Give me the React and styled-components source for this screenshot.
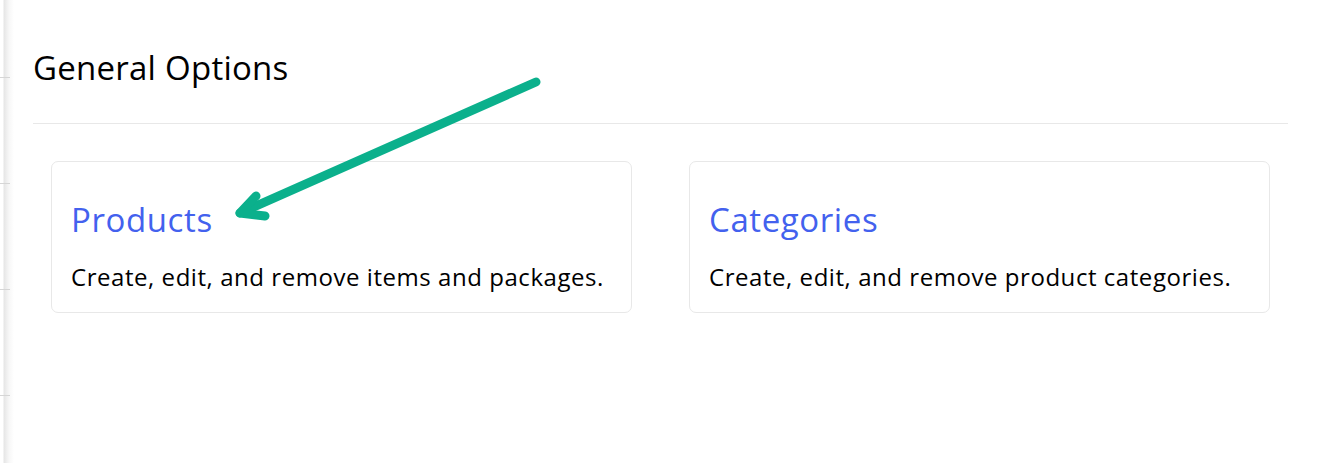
import React from "react";
import styled, { createGlobalStyle } from "styled-components";

const Global = createGlobalStyle`
  html, body { margin: 0; padding: 0; background: #fff; }
  body { font-family: "Open Sans", "Noto Sans", sans-serif; color: #000; }
`;

const Page = styled.div`
  position: relative;
  display: flex;
  width: 1322px;
  height: 463px;
  overflow: hidden;
  background: #fff;
`;

const Sidebar = styled.aside`
  width: 14px;
  flex: none;
  display: flex;
  flex-direction: column;
  background: linear-gradient(to right, #fff 0, #fff 3px, #e6e6e6 4px, #f7f7f7 9px, #fff 14px);
`;

const SideRow = styled.div`
  height: ${(p) => p.$h}px;
  flex: none;
  border-bottom: 1px solid #d6d6d6;
  width: 10px;
`;

const Main = styled.main`
  flex: 1;
  padding: 48px 34px 0 19px;
`;

const Title = styled.h1`
  margin: 0;
  font-size: 33px;
  font-weight: 400;
  letter-spacing: 0.25px;
  line-height: 40px;
  height: 58px;
`;

const Divider = styled.hr`
  margin: 17px 0 0;
  border: 0;
  border-top: 1px solid #e8e8e8;
`;

const Grid = styled.div`
  display: grid;
  grid-template-columns: 581px 581px;
  column-gap: 57px;
  padding: 37px 18px 0;
`;

const Card = styled.a`
  display: block;
  box-sizing: border-box;
  height: 152px;
  border: 1px solid #e8e8e8;
  border-radius: 7px;
  padding: 38px 20px 0 19px;
  text-decoration: none;
  color: inherit;
`;

const CardTitle = styled.h2`
  margin: 0;
  font-size: 33px;
  font-weight: 400;
  letter-spacing: 0.6px;
  line-height: 40px;
  color: #4361ee;
`;

const CardText = styled.p`
  margin: 22px 0 0;
  font-size: 24px;
  letter-spacing: 0.55px;
  line-height: 30px;
  color: #000;
`;

const Arrow = styled.svg`
  position: absolute;
  left: 0;
  top: 0;
  pointer-events: none;
`;

export default function App() {
  return (
    <>
      <Global />
      <Page>
        <Sidebar>
          <SideRow $h={77} />
          <SideRow $h={105} />
          <SideRow $h={105} />
          <SideRow $h={105} />
        </Sidebar>
        <Main>
          <Title>General Options</Title>
          <Divider />
          <Grid>
            <Card href="#">
              <CardTitle>Products</CardTitle>
              <CardText>Create, edit, and remove items and packages.</CardText>
            </Card>
            <Card href="#">
              <CardTitle>Categories</CardTitle>
              <CardText>Create, edit, and remove product categories.</CardText>
            </Card>
          </Grid>
        </Main>
        <Arrow width="1322" height="463" viewBox="0 0 1322 463">
          <g stroke="#0bb08c" strokeWidth="9" strokeLinecap="round" strokeLinejoin="round" fill="none">
            <path d="M536 82 L240 213" />
            <path d="M256 196 L240 213 L265 216" />
          </g>
        </Arrow>
      </Page>
    </>
  );
}
